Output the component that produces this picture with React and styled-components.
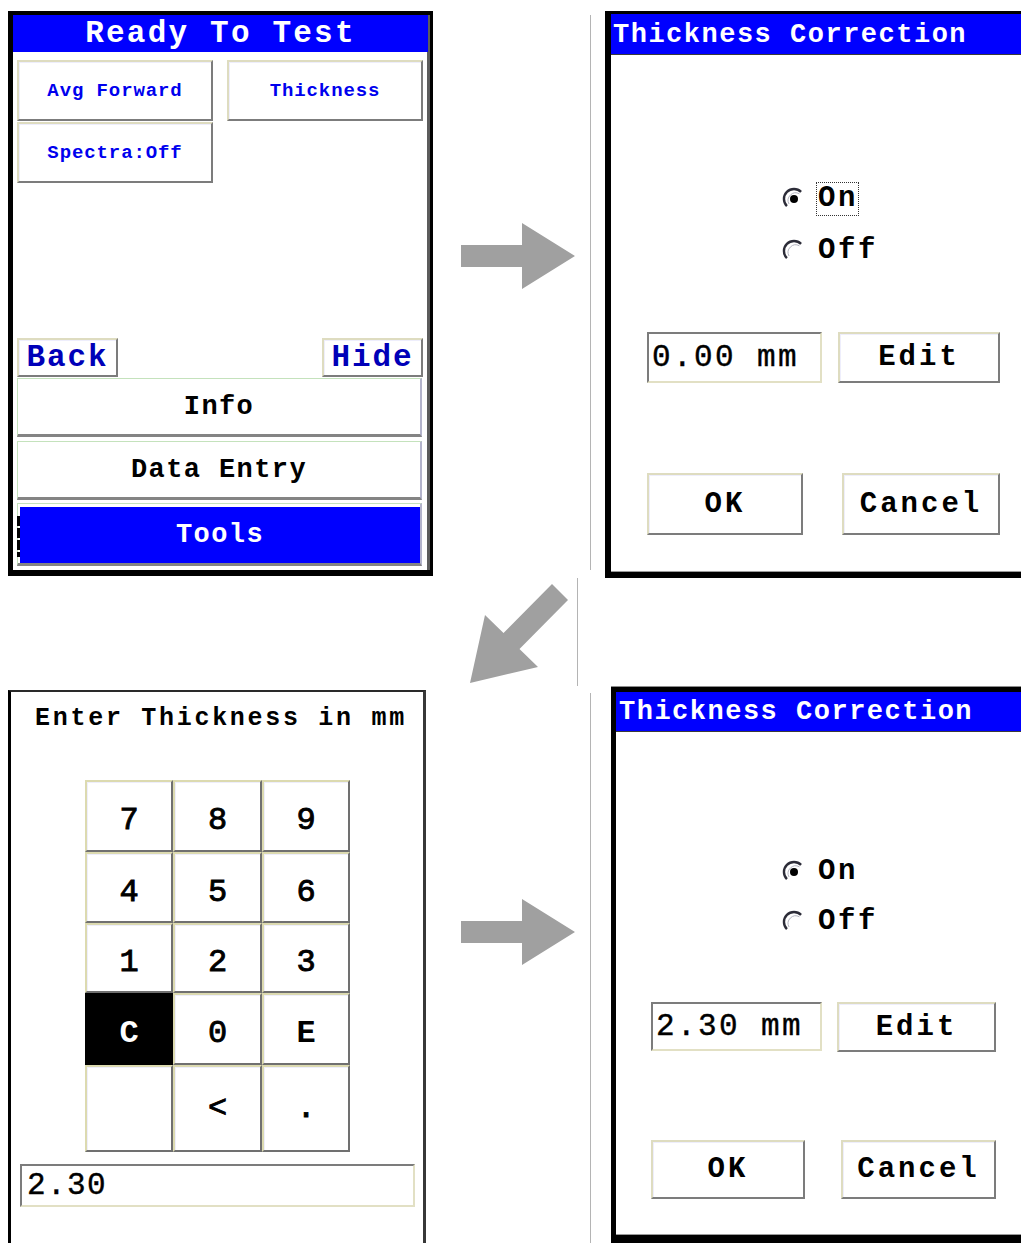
import React from "react";
import styled, { createGlobalStyle, css } from "styled-components";

const GlobalStyle = createGlobalStyle`
  *, *::before, *::after { box-sizing: border-box; }
  html, body { margin: 0; padding: 0; background: #fff; overflow: hidden; }
  body { font-family: "Liberation Mono", "DejaVu Sans Mono", monospace; }
`;

const BLUE = "#0000ff";
const ARROW = "#a0a0a0";

const raised = css`
  border-style: solid;
  border-width: 2px;
  border-color: #dedcc0 #7c7c7c #7c7c7c #dedcc0;
  box-shadow: inset 1px 1px 0 #eeeefc;
  background: #fff;
`;

const sunken = css`
  border-style: solid;
  border-width: 2px;
  border-color: #7c7c7c #e2e0c4 #e2e0c4 #7c7c7c;
  background: #fff;
`;

const Page = styled.div`
  width: 1021px;
  height: 1243px;
  overflow: hidden;
  display: flex;
  flex-direction: column;
`;

const Row = styled.div`
  display: flex;
  align-items: flex-start;
  flex-shrink: 0;
  height: ${(p) => p.$height}px;
  padding-top: ${(p) => p.$top || 0}px;
`;

const ArrowCell = styled.div`
  width: ${(p) => p.$width}px;
  padding-top: ${(p) => p.$top}px;
  padding-left: ${(p) => p.$left}px;
  flex-shrink: 0;
  display: flex;
`;

const Separator = styled.div`
  width: 1px;
  flex-shrink: 0;
  background: #b4b4b4;
  margin-top: ${(p) => p.$top || 0}px;
  margin-left: ${(p) => p.$left || 0}px;
  height: ${(p) => p.$height}px;
`;

/* ---------- Panel 1: Ready To Test ---------- */

const DeviceFrame = styled.div`
  margin-left: 8px;
  width: 425px;
  height: 565px;
  background: #000;
  padding: 4px 3px 6px 5px;
  display: flex;
  flex-shrink: 0;
`;

const DeviceScreen = styled.div`
  flex: 1;
  background: #fff;
  border-right: 3px solid #5c5c5c;
  display: flex;
  flex-direction: column;
`;

const CenterTitle = styled.div`
  height: 37px;
  background: ${BLUE};
  color: #fff;
  font-weight: bold;
  font-size: 31px;
  letter-spacing: 2.2px;
  line-height: 38px;
  text-align: center;
  margin-right: -1px;
`;

const SoftKeys = styled.div`
  display: grid;
  grid-template-columns: 196px 196px;
  grid-auto-rows: 61px;
  column-gap: 14px;
  row-gap: 1px;
  padding: 8px 0 0 4px;
`;

const SoftKey = styled.div`
  ${raised};
  display: flex;
  align-items: center;
  justify-content: center;
  color: #0000ee;
  font-weight: bold;
  font-size: 19px;
  letter-spacing: 0.9px;
`;

const Spacer = styled.div`
  flex: 1;
`;

const NavRow = styled.div`
  display: flex;
  justify-content: space-between;
  padding: 0 4px;
  height: 39px;
`;

const NavKey = styled.div`
  ${raised};
  width: 101px;
  display: flex;
  align-items: center;
  justify-content: center;
  color: #0000b8;
  font-weight: bold;
  font-size: 31px;
  letter-spacing: 1.9px;
`;

const MenuList = styled.div`
  display: flex;
  flex-direction: column;
  padding: 1px 5px 4px 4px;
`;

const MenuItem = styled.div`
  position: relative;
  height: ${(p) => (p.$active ? 63 : 59)}px;
  margin-top: ${(p) => p.$gap || 0}px;
  border-style: solid;
  border-width: 1px 2px 3px 1px;
  border-color: #c4e2bc #b4b4cc #848484 #c4e2bc;
  background: #fff;
  padding: ${(p) => (p.$active ? "3px 0 0 2px" : "0")};
  display: flex;
`;

const MenuLabel = styled.div`
  flex: 1;
  display: flex;
  align-items: center;
  justify-content: center;
  font-weight: bold;
  font-size: 27px;
  letter-spacing: 1.4px;
  color: ${(p) => (p.$active ? "#fff" : "#000")};
  background: ${(p) => (p.$active ? BLUE : "transparent")};
`;

const FocusMark = styled.span`
  position: absolute;
  left: -1px;
  top: 12px;
  bottom: 6px;
  width: 3px;
  background: repeating-linear-gradient(#000 0 10px, transparent 10px 12px);
`;

/* ---------- Dialog: Thickness Correction ---------- */

const DialogFrame = styled.div`
  flex-shrink: 0;
  margin-left: ${(p) => p.$m.left}px;
  width: ${(p) => p.$m.width}px;
  height: ${(p) => p.$m.height}px;
  background: #000;
  border-top: ${(p) => (p.$m.topLine ? "1px solid #8c8c8c" : "none")};
  padding: ${(p) => p.$m.pad};
  display: flex;
`;

const DialogScreen = styled.div`
  flex: 1;
  background: #fff;
  border-bottom: 1px solid #9a9a9a;
  display: flex;
  flex-direction: column;
`;

const DialogTitle = styled.div`
  height: ${(p) => p.$h}px;
  background: ${BLUE};
  border-bottom: 1px solid #3a3a3a;
  color: #fff;
  font-weight: bold;
  font-size: 27px;
  letter-spacing: 1.5px;
  display: flex;
  align-items: center;
  padding-left: ${(p) => p.$pad}px;
  padding-top: 1px;
  white-space: nowrap;
`;

const RadioGroup = styled.div`
  display: flex;
  flex-direction: column;
  gap: ${(p) => p.$gap}px;
  margin-top: ${(p) => p.$top}px;
  padding-left: ${(p) => p.$left}px;
`;

const RadioRow = styled.div`
  height: 36px;
  display: flex;
  align-items: center;
  gap: 10px;

  svg {
    flex-shrink: 0;
  }
`;

const RadioLabel = styled.span`
  font-weight: bold;
  font-size: 29px;
  letter-spacing: 2.6px;
  line-height: 30px;
  padding: 1px 0 1px 1px;
  border: 1px dotted ${(p) => (p.$focus ? "#333" : "transparent")};
`;

const FieldRow = styled.div`
  display: flex;
  gap: ${(p) => p.$gap}px;
  margin-top: ${(p) => p.$top}px;
  padding-left: ${(p) => p.$left}px;
`;

const ValueBox = styled.div`
  ${sunken};
  width: ${(p) => p.$w}px;
  height: ${(p) => p.$h}px;
  display: flex;
  align-items: center;
  padding-left: ${(p) => p.$pad || 3}px;
  font-size: 31px;
  letter-spacing: 2.4px;
  color: #000;
  white-space: nowrap;
  -webkit-text-stroke: 0.4px #000;
`;

const PushButton = styled.div`
  ${raised};
  width: ${(p) => p.$w}px;
  height: ${(p) => p.$h}px;
  display: flex;
  align-items: center;
  justify-content: center;
  font-weight: bold;
  font-size: 29px;
  letter-spacing: 3px;
  color: #000;
`;

/* ---------- Keypad ---------- */

const KeypadFrame = styled.div`
  flex-shrink: 0;
  margin-left: 8px;
  margin-top: 4px;
  width: 418px;
  height: 560px;
  border-left: 3px solid #000;
  border-top: 2px solid #2a2a2a;
  border-right: 3px solid #383838;
  background: #fff;
  display: flex;
  flex-direction: column;
`;

const KeypadTitle = styled.div`
  height: 53px;
  display: flex;
  align-items: center;
  justify-content: center;
  padding-left: 8px;
  font-weight: bold;
  font-size: 25px;
  letter-spacing: 2.7px;
  white-space: nowrap;
`;

const KeyGrid = styled.div`
  display: grid;
  grid-template-columns: 88px 89px 88px;
  grid-template-rows: 72px 71px 70px 72px 87px;
  margin: 35px 0 0 74px;
  width: 265px;
`;

const Key = styled.div`
  ${raised};
  border-color: ${(p) =>
    p.$active ? "#000" : "#dcdab0 #707070 #707070 #dcdab0"};
  box-shadow: ${(p) => (p.$active ? "none" : "inset 1px 1px 0 #eeeefc")};
  background: ${(p) => (p.$active ? "#000" : "#fff")};
  color: ${(p) => (p.$active ? "#fff" : "#000")};
  display: flex;
  align-items: center;
  justify-content: center;
  padding-top: ${(p) => (p.$last ? 0 : 9)}px;
  font-weight: ${(p) => (p.$letter ? "bold" : "normal")};
  -webkit-text-stroke: ${(p) => (p.$letter ? "0" : "0.9px #000")};
  font-size: 32px;
`;

const EntryBox = styled(ValueBox)`
  margin: 12px 0 0 9px;
  letter-spacing: 1.4px;
`;

/* ---------- Drawings ---------- */

const RightArrow = () => (
  <svg width="115" height="67" viewBox="0 0 115 67">
    <polygon
      points="0,22 61,22 61,0 114,33 61,66 61,44 0,44"
      fill={ARROW}
    />
  </svg>
);

const DiagonalArrow = () => (
  <svg width="102" height="102" viewBox="0 0 102 102">
    <polygon
      points="2,100 17,32 35.5,50 84,1 100,17 51.5,66 70,84"
      fill={ARROW}
    />
  </svg>
);

const RadioIcon = ({ checked }) => (
  <svg width="24" height="26" viewBox="0 0 24 26">
    <path
      d="M4.9 20.1 A10 10 0 0 1 19.1 5.9"
      fill="none"
      stroke="#2c2c38"
      strokeWidth="2.4"
    />
    <path
      d="M7 18 A7.6 7.6 0 0 1 17.4 7.8"
      fill="none"
      stroke="#b4b4c0"
      strokeWidth="1"
    />
    {checked && <circle cx="12" cy="13" r="4" fill="#000" />}
  </svg>
);

/* ---------- Screens ---------- */

const ReadyPanel = () => (
  <DeviceFrame>
    <DeviceScreen>
      <CenterTitle>Ready To Test</CenterTitle>
      <SoftKeys>
        <SoftKey>Avg Forward</SoftKey>
        <SoftKey>Thickness</SoftKey>
        <SoftKey>Spectra:Off</SoftKey>
      </SoftKeys>
      <Spacer />
      <NavRow>
        <NavKey>Back</NavKey>
        <NavKey>Hide</NavKey>
      </NavRow>
      <MenuList>
        <MenuItem>
          <MenuLabel>Info</MenuLabel>
        </MenuItem>
        <MenuItem $gap={4}>
          <MenuLabel>Data Entry</MenuLabel>
        </MenuItem>
        <MenuItem $gap={3} $active>
          <FocusMark />
          <MenuLabel $active>Tools</MenuLabel>
        </MenuItem>
      </MenuList>
    </DeviceScreen>
  </DeviceFrame>
);

const topDialog = {
  frame: { left: 14, width: 416, height: 567, pad: "3px 0 6px 6px" },
  barH: 41,
  titlePad: 2,
  radioTop: 126,
  radioGap: 16,
  radioLeft: 171,
  fieldTop: 63,
  fieldLeft: 36,
  fieldGap: 16,
  box: [175, 51],
  edit: [162, 51],
  buttonTop: 90,
  buttonGap: 39,
  ok: [156, 62],
  cancel: [158, 62],
};

const bottomDialog = {
  frame: {
    left: 20,
    width: 410,
    height: 557,
    pad: "5px 0 8px 5px",
    topLine: true,
  },
  barH: 40,
  titlePad: 3,
  radioTop: 122,
  radioGap: 14,
  radioLeft: 166,
  fieldTop: 62,
  fieldLeft: 35,
  fieldGap: 15,
  box: [171, 49],
  edit: [159, 50],
  buttonTop: 88,
  buttonGap: 36,
  ok: [154, 59],
  cancel: [155, 59],
};

const ThicknessDialog = ({ m, value, focusOn }) => (
  <DialogFrame $m={m.frame}>
    <DialogScreen>
      <DialogTitle $h={m.barH} $pad={m.titlePad}>
        Thickness Correction
      </DialogTitle>
      <RadioGroup $top={m.radioTop} $gap={m.radioGap} $left={m.radioLeft}>
        <RadioRow>
          <RadioIcon checked />
          <RadioLabel $focus={focusOn}>On</RadioLabel>
        </RadioRow>
        <RadioRow>
          <RadioIcon />
          <RadioLabel>Off</RadioLabel>
        </RadioRow>
      </RadioGroup>
      <FieldRow $top={m.fieldTop} $left={m.fieldLeft} $gap={m.fieldGap}>
        <ValueBox $w={m.box[0]} $h={m.box[1]}>
          {value} mm
        </ValueBox>
        <PushButton $w={m.edit[0]} $h={m.edit[1]}>
          Edit
        </PushButton>
      </FieldRow>
      <FieldRow $top={m.buttonTop} $left={m.fieldLeft} $gap={m.buttonGap}>
        <PushButton $w={m.ok[0]} $h={m.ok[1]}>
          OK
        </PushButton>
        <PushButton $w={m.cancel[0]} $h={m.cancel[1]}>
          Cancel
        </PushButton>
      </FieldRow>
    </DialogScreen>
  </DialogFrame>
);

const keys = ["7", "8", "9", "4", "5", "6", "1", "2", "3", "C", "0", "E", "", "<", "."];

const KeypadPanel = () => (
  <KeypadFrame>
    <KeypadTitle>Enter Thickness in mm</KeypadTitle>
    <KeyGrid>
      {keys.map((k, i) => (
        <Key
          key={i}
          $active={k === "C"}
          $letter={k === "C" || k === "E"}
          $last={i >= 12}
        >
          {k}
        </Key>
      ))}
    </KeyGrid>
    <EntryBox $w={395} $h={43} $pad={5}>
      2.30
    </EntryBox>
  </KeypadFrame>
);

export default function App() {
  return (
    <>
      <GlobalStyle />
      <Page>
        <Row $height={578} $top={11}>
          <ReadyPanel />
          <ArrowCell $width={157} $top={212} $left={28}>
            <RightArrow />
          </ArrowCell>
          <Separator $top={4} $height={555} />
          <ThicknessDialog m={topDialog} value="0.00" focusOn />
        </Row>
        <Row $height={108}>
          <ArrowCell $width={570} $top={5} $left={468}>
            <DiagonalArrow />
          </ArrowCell>
          <Separator $left={7} $height={108} />
        </Row>
        <Row $height={557}>
          <KeypadPanel />
          <ArrowCell $width={164} $top={213} $left={35}>
            <RightArrow />
          </ArrowCell>
          <Separator $top={7} $height={550} />
          <ThicknessDialog m={bottomDialog} value="2.30" />
        </Row>
      </Page>
    </>
  );
}
